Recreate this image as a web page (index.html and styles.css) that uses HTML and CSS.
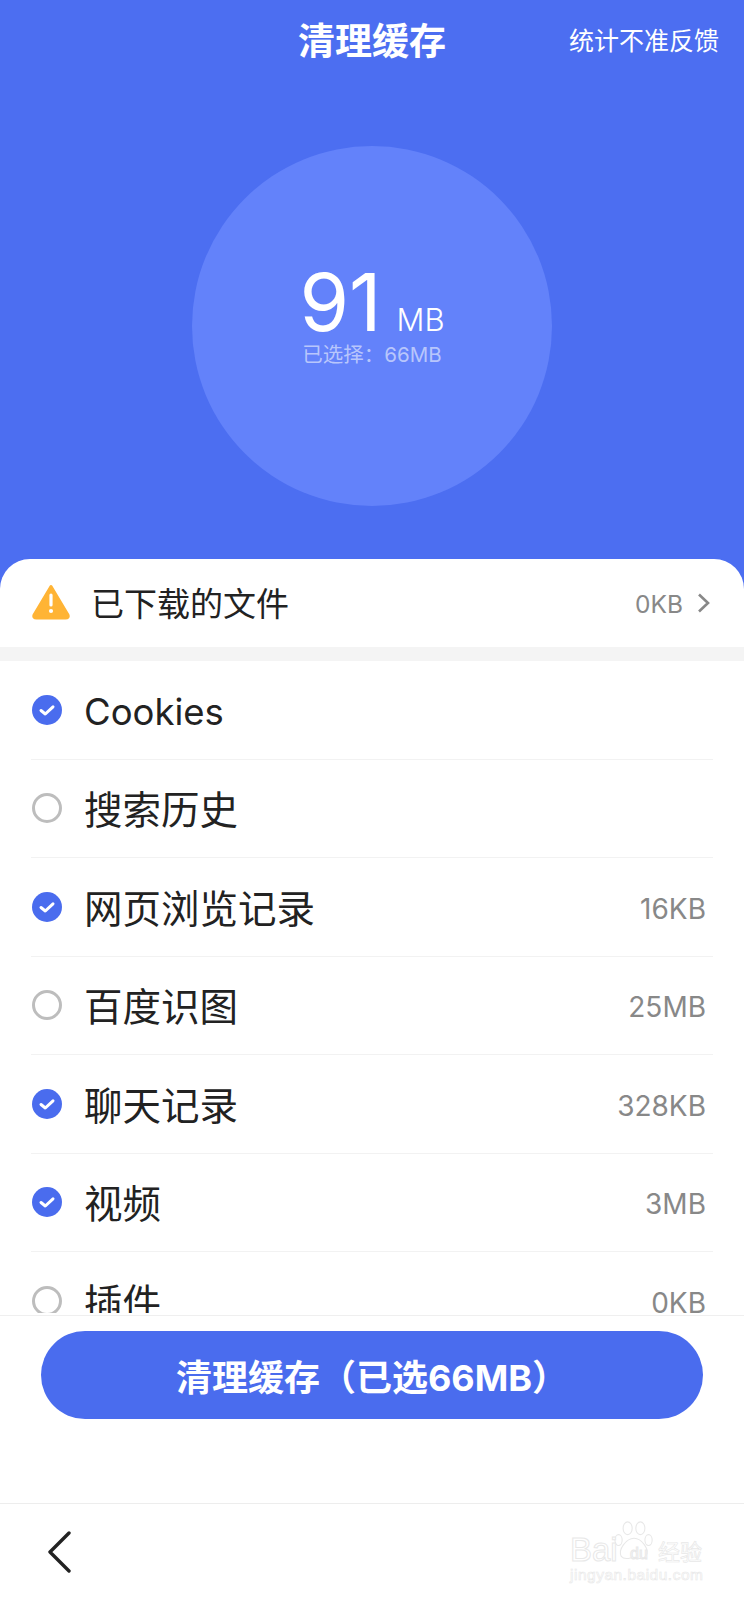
FILE: index.html
```html
<!DOCTYPE html>
<html lang="zh-CN">
<head>
<meta charset="utf-8">
<title>清理缓存</title>
<link rel="stylesheet" href="styles.css">
</head>
<body>
<div class="app">
  <section class="hero">
    <header class="topbar">
      <h1 class="title">清理缓存</h1>
      <a class="feedback">统计不准反馈</a>
    </header>
    <div class="gauge">
      <div class="size"><span class="num">91</span><span class="unit">MB</span></div>
      <div class="picked">已选择：66MB</div>
    </div>
  </section>
  <div class="sheet-wrap">
    <div class="download">
      <svg class="warn" viewBox="0 0 38 36"><path d="M19 2.5 L36 31 Q37 34 33.5 34 H4.5 Q1 34 2 31 Z" fill="#FFB435" stroke="#FFB435" stroke-width="3" stroke-linejoin="round"/><rect x="17.4" y="9.5" width="3.2" height="13" rx="1.6" fill="#fff"/><circle cx="19" cy="27" r="2.1" fill="#fff"/></svg>
      <span class="download-label">已下载的文件</span>
      <span class="download-size">0KB</span>
      <svg class="chev" viewBox="0 0 13 20"><path d="M2 1.5 L11 10 L2 18.5" fill="none" stroke="#888" stroke-width="2.6"/></svg>
    </div>
  </div>
  <div class="gap"></div>
  <ul class="list">
    <li class="row"><svg class="check" viewBox="0 0 30 30"><circle cx="15" cy="15" r="15" fill="#4A6CEE"/><path d="M9 15.5 L13.3 19 L21 11.8" fill="none" stroke="#fff" stroke-width="3" stroke-linecap="round" stroke-linejoin="round"/></svg><span class="label">Cookies</span></li>
    <li class="row"><span class="radio"></span><span class="label">搜索历史</span></li>
    <li class="row"><svg class="check" viewBox="0 0 30 30"><circle cx="15" cy="15" r="15" fill="#4A6CEE"/><path d="M9 15.5 L13.3 19 L21 11.8" fill="none" stroke="#fff" stroke-width="3" stroke-linecap="round" stroke-linejoin="round"/></svg><span class="label">网页浏览记录</span><span class="value">16KB</span></li>
    <li class="row"><span class="radio"></span><span class="label">百度识图</span><span class="value">25MB</span></li>
    <li class="row"><svg class="check" viewBox="0 0 30 30"><circle cx="15" cy="15" r="15" fill="#4A6CEE"/><path d="M9 15.5 L13.3 19 L21 11.8" fill="none" stroke="#fff" stroke-width="3" stroke-linecap="round" stroke-linejoin="round"/></svg><span class="label">聊天记录</span><span class="value">328KB</span></li>
    <li class="row"><svg class="check" viewBox="0 0 30 30"><circle cx="15" cy="15" r="15" fill="#4A6CEE"/><path d="M9 15.5 L13.3 19 L21 11.8" fill="none" stroke="#fff" stroke-width="3" stroke-linecap="round" stroke-linejoin="round"/></svg><span class="label">视频</span><span class="value">3MB</span></li>
    <li class="row"><span class="radio"></span><span class="label">插件</span><span class="value">0KB</span></li>
  </ul>
  <div class="action">
    <button class="clean">清理缓存（已选66MB）</button>
  </div>
  <nav class="nav">
    <svg class="back" viewBox="0 0 24 42"><path d="M22 2 L3 21 L22 40" fill="none" stroke="#222" stroke-width="3.4" stroke-linecap="round" stroke-linejoin="round"/></svg>
    <div class="mark">
      <svg class="paw" viewBox="0 0 44 46"><g fill="#fff" stroke="#e8e8e8" stroke-width="1.2"><ellipse cx="5" cy="22" rx="4" ry="6"/><ellipse cx="15" cy="9" rx="5" ry="7"/><ellipse cx="29" cy="9" rx="5" ry="7"/><ellipse cx="38" cy="22" rx="4" ry="6"/><path d="M22 20 C30 20 40 32 35 40 C31 45 26 41 22 41 C18 41 12 45 8 40 C4 32 14 20 22 20 Z"/></g></svg>
      <span class="mark-bai">Bai</span><span class="mark-du">du</span><span class="mark-jy">经验</span>
      <span class="mark-url">jingyan.baidu.com</span>
    </div>
  </nav>
</div>
</body>
</html>
```

FILE: styles.css
```css
* { box-sizing: border-box; }
html, body { margin: 0; padding: 0; background: #fff; }
body { font-family: Inter, "Noto Sans CJK SC", "Noto Sans", sans-serif; color: #222; }
.app { width: 744px; height: 1600px; display: flex; flex-direction: column; overflow: hidden; }

.hero { height: 559px; flex: none; background: #4C6EF1; color: #fff; display: flex; flex-direction: column; align-items: center; }
.topbar { width: 100%; height: 84px; flex: none; display: flex; align-items: center; justify-content: center; position: relative; }
.title { margin: 0; font-size: 37px; line-height: 84px; font-weight: 700; }
.feedback { position: absolute; right: 25px; top: 24px; font-size: 25px; line-height: 34px; }
.gauge { width: 360px; height: 360px; margin-top: 62px; border-radius: 50%; background: #6382FA; display: flex; flex-direction: column; align-items: center; padding-top: 118px; }
.size { display: flex; align-items: baseline; gap: 15px; height: 76px; }
.num { font-size: 80px; line-height: 76px; font-weight: 400; }
.unit { font-size: 31px; line-height: 40px; font-weight: 300; }
.picked { font-size: 20.5px; line-height: 28px; color: #B8C6FC; margin-top: 1px; font-weight: 400; }

.sheet-wrap { flex: none; background: #4C6EF1; }
.download { height: 88px; background: #fff; border-radius: 30px 30px 0 0; display: flex; align-items: center; padding: 0 34px 0 32px; }
.warn { width: 38px; height: 36px; flex: none; margin-top: -3px; }
.download-label { font-size: 33px; line-height: 44px; margin-left: 21px; flex: 1; margin-top: 1px; }
.download-size { font-size: 24.5px; line-height: 34px; color: #888; margin-top: 2px; }
.chev { width: 13px; height: 20px; margin-left: 14px; flex: none; margin-top: -1px; }
.gap { height: 14px; flex: none; background: #F4F4F4; }

.list { list-style: none; margin: 0 0 2px; padding: 0 31px; height: 652px; flex: none; overflow: hidden; background: #fff; }
.row { height: 98.5px; flex: none; display: flex; align-items: center; border-bottom: 1px solid #F2F2F2; padding-right: 7px; }
.check, .radio { width: 30px; height: 30px; flex: none; margin-left: 1px; }
.radio { border-radius: 50%; border: 3px solid #BDBDBD; }
.label { font-size: 36.5px; line-height: 50px; flex: 1; margin-left: 22px; margin-top: 4px; }
.row:not(:nth-child(1)) .label { font-size: 38.5px; }
.value { font-size: 28px; line-height: 38px; color: #888; margin-top: 4px; }

.action { height: 188px; flex: none; border-top: 1px solid #EFEFEF; padding: 15px 41px 0; background: #fff; }
.clean { display: block; width: 662px; height: 88px; border: 0; border-radius: 44px; background: #4A6CEE; color: #fff; font-family: inherit; font-size: 36px; font-weight: 700; padding: 0; }

.nav { flex: 1; border-top: 1px solid #EDEDED; position: relative; display: flex; align-items: flex-start; padding: 27px 0 0 47px; }
.back { width: 24px; height: 42px; flex: none; }
.mark { position: absolute; left: 570px; top: 10px; width: 160px; height: 80px; }
.mark span { position: absolute; color: #fff; -webkit-text-stroke: 1px #E8E8E8; font-family: "Liberation Sans", sans-serif; }
.paw { position: absolute; left: 44px; top: 6px; width: 40px; height: 42px; }
.mark-bai { left: 0; top: 18px; font-size: 33px; line-height: 36px; }
.mark-du { left: 60px; top: 30px; font-size: 16px; line-height: 20px; }
.mark .mark-jy { left: 88px; top: 23px; font-size: 22px; line-height: 26px; font-family: "Noto Sans CJK SC", sans-serif; -webkit-text-stroke-width: .7px; }
.mark .mark-url { left: 0; top: 51px; font-size: 15.5px; line-height: 20px; letter-spacing: 0.5px; -webkit-text-stroke-width: .6px; }
```
